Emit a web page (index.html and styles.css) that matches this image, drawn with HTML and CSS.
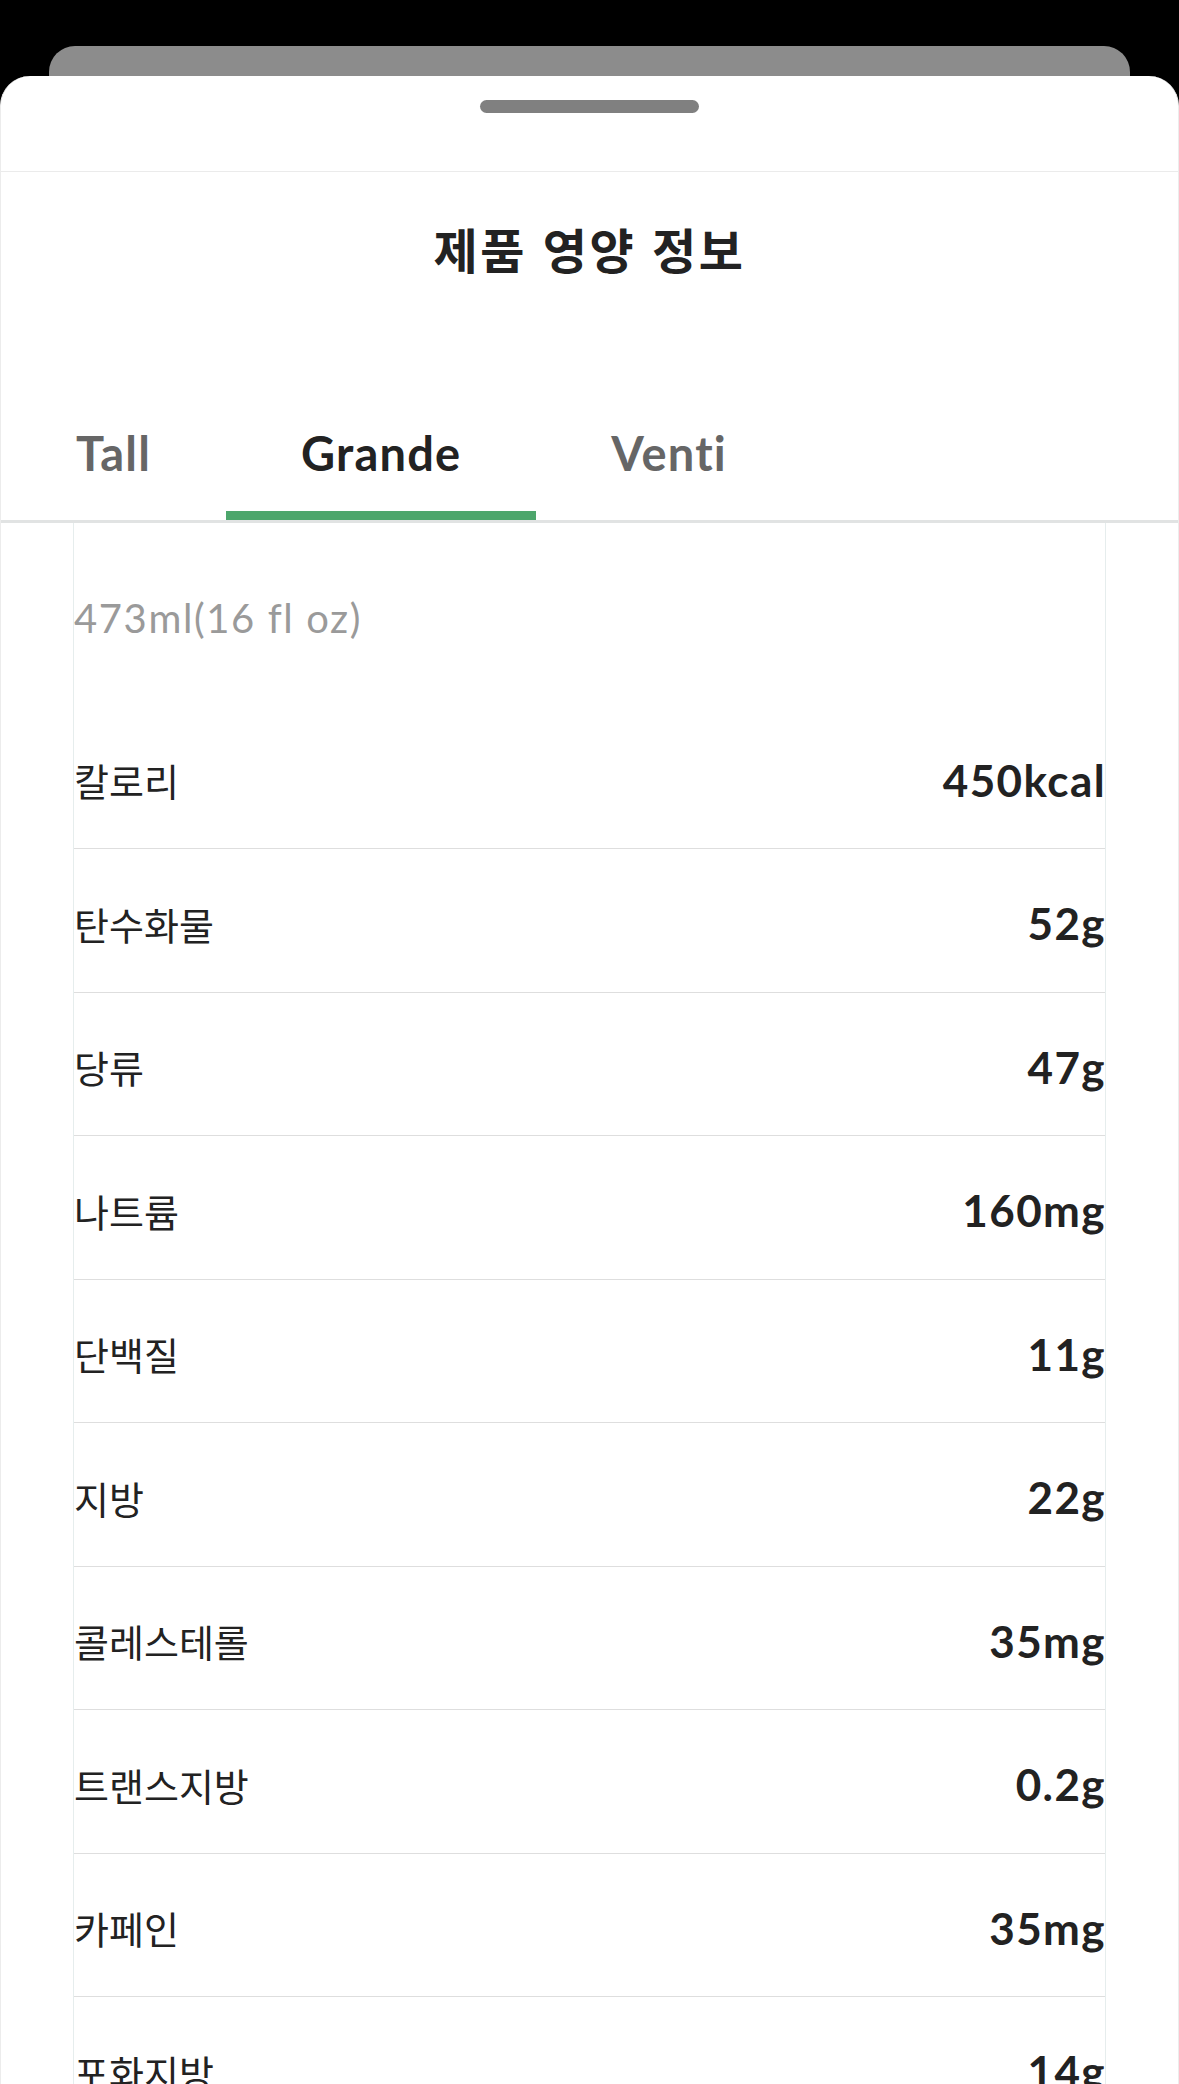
FILE: index.html
```html
<!DOCTYPE html>
<html lang="ko">
<head>
<meta charset="utf-8">
<title>제품 영양 정보</title>
<link rel="stylesheet" href="styles.css">
</head>
<body>
<div class="screen">
  <div class="back-card"></div>
  <div class="sheet">
    <div class="grabber-area"><div class="grabber"></div></div>
    <h1 class="title">제품 영양 정보</h1>
    <nav class="tabs">
      <div class="tab">Tall</div>
      <div class="tab active">Grande</div>
      <div class="tab">Venti</div>
    </nav>
    <section class="panel">
      <div class="size">473ml(16 fl oz)</div>
      <ul class="rows">
        <li class="row"><span class="label">칼로리</span><span class="value">450kcal</span></li>
        <li class="row"><span class="label">탄수화물</span><span class="value">52g</span></li>
        <li class="row"><span class="label">당류</span><span class="value">47g</span></li>
        <li class="row"><span class="label">나트륨</span><span class="value">160mg</span></li>
        <li class="row"><span class="label">단백질</span><span class="value">11g</span></li>
        <li class="row"><span class="label">지방</span><span class="value">22g</span></li>
        <li class="row"><span class="label">콜레스테롤</span><span class="value">35mg</span></li>
        <li class="row"><span class="label">트랜스지방</span><span class="value">0.2g</span></li>
        <li class="row"><span class="label">카페인</span><span class="value">35mg</span></li>
        <li class="row"><span class="label">포화지방</span><span class="value">14g</span></li>
      </ul>
    </section>
  </div>
</div>
</body>
</html>
```
FILE: styles.css
```css
* { box-sizing: border-box; }
html, body { margin: 0; padding: 0; height: 2084px; overflow: hidden; }
body { background: #000; font-family: "Noto Sans CJK KR", "Noto Sans", sans-serif; color: #222; }

.screen { padding-top: 46px; }

.back-card {
  margin: 0 49px;
  height: 30px;
  background: #8c8c8c;
  border-radius: 26px 26px 0 0;
}

.sheet {
  background: #fff;
  border-radius: 30px 30px 0 0;
  min-height: 2100px;
  border-left: 1px solid #ececec;
  border-right: 1px solid #ececec;
}

.grabber-area {
  height: 96px;
  padding-top: 24px;
  border-bottom: 1px solid #ebebeb;
}
.grabber {
  width: 219px;
  height: 13px;
  margin: 0 auto;
  background: #808080;
  border-radius: 7px;
}

.title {
  margin: 46px 0 0;
  height: 60px;
  line-height: 60px;
  text-align: center;
  font-size: 48px;
  letter-spacing: 2.5px;
  font-weight: 700;
  color: #222;
}

.tabs {
  display: flex;
  margin-top: 145px;
  border-bottom: 3px solid #e1e3e3;
}
.tab {
  padding: 0 75px 28px;
  border-bottom: 9px solid transparent;
  font-family: Lato, "Noto Sans", sans-serif;
  font-size: 47px;
  letter-spacing: 1.2px;
  line-height: 60px;
  font-weight: 700;
  color: #666;
}
.tab.active {
  color: #222;
  border-bottom-color: #4da66c;
}

.panel {
  margin: 0 72px;
  border-left: 1px solid #e6eded;
  border-right: 1px solid #e6eded;
}

.size {
  height: 182.5px;
  padding-top: 70px;
  font-family: Lato, "Noto Sans", sans-serif;
  font-size: 40px;
  letter-spacing: 1.6px;
  line-height: 50px;
  color: #9a9a9a;
}

.rows { list-style: none; margin: 0; padding: 0; }
.row {
  display: flex;
  align-items: center;
  justify-content: space-between;
  height: 143.5px;
  padding: 6px 0 0;
  border-bottom: 1px solid #dedede;
}
.label {
  font-size: 38px;
  color: #222;
}
.value {
  font-family: Lato, "Noto Sans", sans-serif;
  font-size: 44px;
  letter-spacing: 1.4px;
  margin-right: -1px;
  font-weight: 700;
  color: #222;
}
```
